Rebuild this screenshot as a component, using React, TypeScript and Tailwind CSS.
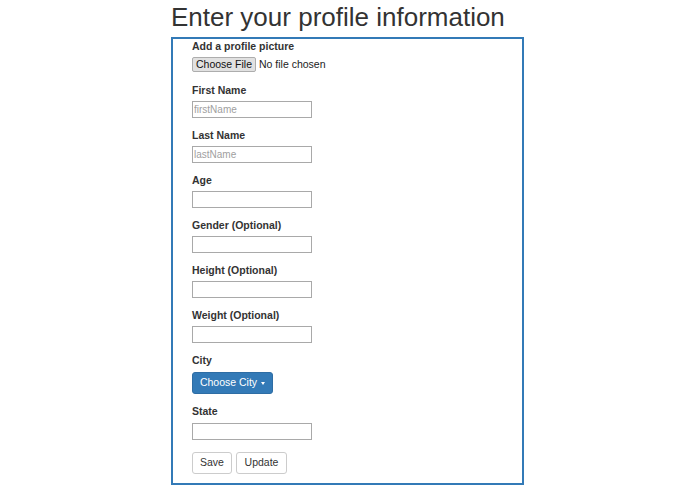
type Field = {
  label: string;
  placeholder?: string;
};

const fields: Field[] = [
  { label: 'First Name', placeholder: 'firstName' },
  { label: 'Last Name', placeholder: 'lastName' },
  { label: 'Age' },
  { label: 'Gender (Optional)' },
  { label: 'Height (Optional)' },
  { label: 'Weight (Optional)' },
];

function Label({ children }: { children: string }) {
  return <label className="block text-[10.5px] font-bold leading-[15px] text-[#333]">{children}</label>;
}

function TextField({ label, placeholder }: Field) {
  return (
    <div className="mb-[10px] flex flex-col">
      <Label>{label}</Label>
      <input
        type="text"
        placeholder={placeholder}
        className="mt-[3px] h-[17px] w-[120px] border border-[#a9a9a9] bg-white px-[1px] text-[10px] text-[#333] outline-none placeholder:text-[#a0a0a0]"
      />
    </div>
  );
}

export default function App() {
  return (
    <main className="min-h-screen bg-white font-['Liberation_Sans',Arial,sans-serif] text-[#333]">
      <div className="ml-[171px] w-[353px]">
        <h1 className="mt-[2px] mb-[5px] text-[26px] font-normal leading-[30px] text-[#333]">
          Enter your profile information
        </h1>

        <form className="flex flex-col border-2 border-[#337ab7] pl-[19px] pb-[9px]">
          <div className="mb-[11px] flex flex-col">
            <Label>Add a profile picture</Label>
            <div className="mt-[3px] flex items-center">
              <button
                type="button"
                className="h-[15px] w-[64px] rounded-[2px] border border-[#adadad] bg-[#e1e1e1] text-[10.5px] leading-[13px] text-[#111]"
              >
                Choose File
              </button>
              <span className="ml-[3px] text-[10.5px] leading-[15px] text-[#222]">No file chosen</span>
            </div>
          </div>

          {fields.map((field) => (
            <TextField key={field.label} {...field} />
          ))}

          <div className="mb-[10px] flex flex-col">
            <Label>City</Label>
            <button
              type="button"
              className="mt-[4px] flex h-[22px] w-[81px] items-center justify-center gap-[4px] rounded-[3px] border border-[#2e6da4] bg-[#337ab7] text-[10.5px] text-white"
            >
              Choose City
              <span className="h-0 w-0 border-x-[2.5px] border-t-[3px] border-x-transparent border-t-white" />
            </button>
          </div>

          <div className="mb-[12px] flex flex-col">
            <Label>State</Label>
            <input
              type="text"
              className="mt-[4px] h-[17px] w-[120px] border border-[#a9a9a9] bg-white outline-none"
            />
          </div>

          <div className="flex gap-[4px]">
            <button
              type="button"
              className="h-[22px] w-[40px] rounded-[3px] border border-[#ccc] bg-white text-[10.5px] text-[#333]"
            >
              Save
            </button>
            <button
              type="button"
              className="h-[22px] w-[51px] rounded-[3px] border border-[#ccc] bg-white text-[10.5px] text-[#333]"
            >
              Update
            </button>
          </div>
        </form>
      </div>
    </main>
  );
}
